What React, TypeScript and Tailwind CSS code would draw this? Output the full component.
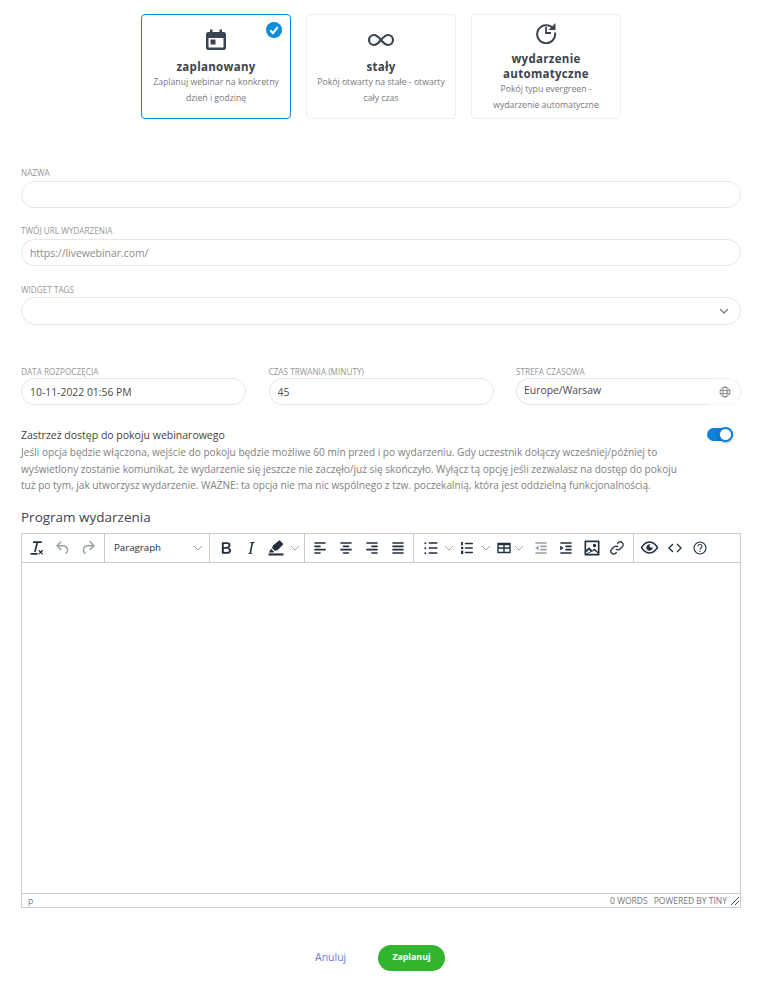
import React from "react";

const I = ({ children, s = 20, cls = "text-[#222f3e]" }: { children: React.ReactNode; s?: number; cls?: string }) => (
  <svg width={s} height={s} viewBox="0 0 24 24" fill="currentColor" className={cls}>{children}</svg>
);

const lines = (rows: [number, number][]) =>
  rows.map(([x, w], i) => <rect key={i} x={x} y={5 + i * 4} width={w} height={2} rx={1} />);

const Chev = ({ cls = "w-[10px]" }: { cls?: string }) => (
  <span className={`flex justify-center ${cls}`}>
    <svg className="shrink-0" width="10" height="10" viewBox="0 0 10 10" fill="none" stroke="#a0a6ae" strokeWidth="1"><path d="M1 3l4 4 4-4" /></svg>
  </span>
);

const B = ({ children, w = "w-[26px]" }: { children: React.ReactNode; w?: string }) => (
  <span className={`flex h-[28px] shrink-0 items-center justify-center ${w}`}>{children}</span>
);

const Group = ({ cls, children }: { cls: string; children: React.ReactNode }) => (
  <div className={`flex h-[28px] shrink-0 items-center border-r border-[#cccccc] ${cls}`}>{children}</div>
);

const Field = ({ label, children, mb = "mb-[2px]" }: { label: string; children: React.ReactNode; mb?: string }) => (
  <div className="min-w-0">
    <div className={`text-[8.2px] uppercase leading-[12px] text-[#969696] ${mb}`}>{label}</div>
    {children}
  </div>
);

const inputCls =
  "block h-[27px] w-full rounded-[14px] border border-[#e6e6e6] bg-white px-[8px] text-[10.4px] text-[#4a4a4a] outline-none placeholder:text-[#8a8a8a]";

const Card = ({ active, icon, title, desc }: { active?: boolean; icon: React.ReactNode; title: string; desc: string[] }) => (
  <div className={`relative flex h-[105px] w-[150px] flex-col items-center justify-center rounded-[4px] border bg-white px-[6px] text-center ${active ? "border-[#0d8ddb]" : "border-[#eeeeee]"}`}>
    {active && (
      <svg className="absolute right-[8px] top-[7px]" width="16" height="16" viewBox="0 0 16 16">
        <circle cx="8" cy="8" r="8" fill="#0d8ddb" />
        <path d="M4.3 8.3l2.6 2.8 4.8-6" fill="none" stroke="#fff" strokeWidth="2" />
      </svg>
    )}
    {icon}
    <div className="mt-[7px] text-[11.5px] font-bold leading-[15px] tracking-[0.3px] text-[#3c4350]">{title}</div>
    {desc.map((d) => (
      <div key={d} className="text-[8.7px] leading-[16px] text-[#77787d]">{d}</div>
    ))}
  </div>
);

export default function App() {
  return (
    <div className="min-h-[986px] w-[768px] bg-white pl-[21px] pr-[27px] pt-[14px] font-['Open_Sans',sans-serif]">
      <div className="flex justify-center gap-[15px]">
        <Card
          active
          title="zaplanowany"
          desc={["Zaplanuj webinar na konkretny", "dzień i godzinę"]}
          icon={
            <svg width="24" height="24" viewBox="0 0 24 24" className="text-[#3c4350]" fill="currentColor">
              <path fillRule="evenodd" d="M6 1.5h2.5V4h7V1.5H18V4h1.5A2.5 2.5 0 0 1 22 6.5v13a2.5 2.5 0 0 1-2.5 2.5h-15A2.5 2.5 0 0 1 2 19.5v-13A2.5 2.5 0 0 1 4.5 4H6V1.5zM4.5 10v9.500h15V10h-15zM6.5 11.500h5v5h-5v-5z" />
            </svg>
          }
        />
        <Card
          title="stały"
          desc={["Pokój otwarty na stałe - otwarty", "cały czas"]}
          icon={
            <svg width="28" height="24" viewBox="0 0 28 24" fill="none" stroke="#3c4350" strokeWidth="2.2">
              <path d="M14 12c-2.5-3-4.3-5-7-5a5 5 0 0 0 0 10c2.700 0 4.500-2 7-5zm0 0c2.500 3 4.300 5 7 5a5 5 0 0 0 0-10c-2.700 0-4.500 2-7 5z" />
            </svg>
          }
        />
        <Card
          title="wydarzenie automatyczne"
          desc={["Pokój typu evergreen -", "wydarzenie automatyczne"]}
          icon={
            <svg width="24" height="24" viewBox="0 0 24 24" fill="none" stroke="#3c4350" strokeWidth="2">
              <path d="M19.5 9A9 9 0 1 0 21 12.500" />
              <path d="M12 7v6h5" strokeWidth="1.8" />
              <path d="M21.5 3v7h-7z" fill="#3c4350" stroke="none" />
            </svg>
          }
        />
      </div>

      <div className="mt-[48px] flex flex-col gap-[17px]">
        <Field label="Nazwa"><input className={inputCls} /></Field>
        <Field label="Twój URL wydarzenia"><input className={inputCls} placeholder="https://livewebinar.com/" /></Field>
        <div className="mt-[1px]">
          <Field label="Widget tags" mb="mb-[1px]">
            <div className="flex h-[28px] items-center justify-end rounded-[14px] border border-[#e6e6e6] pr-[11px]">
              <svg width="10" height="10" viewBox="0 0 10 10" fill="none" stroke="#7f7f7f" strokeWidth="1.3"><path d="M1 3l4 4 4-4" /></svg>
            </div>
          </Field>
        </div>
      </div>

      <div className="mt-[41px] grid grid-cols-3 gap-[22.5px]">
        <Field label="Data rozpoczęcia" mb="mb-0"><input className={inputCls} defaultValue="10-11-2022 01:56 PM" /></Field>
        <Field label="Czas trwania (minuty)" mb="mb-0"><input className={inputCls} defaultValue="45" /></Field>
        <Field label="Strefa czasowa" mb="mb-0">
          <div className="flex h-[27px] text-[10.4px] text-[#4a4a4a]">
            <span className="flex flex-1 items-center rounded-l-[14px] border-y border-l border-[#e6e6e6] pb-[2px] pl-[7px]">Europe/Warsaw</span>
            <span className="flex w-[31px] items-center justify-center rounded-r-[14px] border-y border-r border-[#eeeeee] border-b-[#f7f7f7]">
              <svg width="12" height="12" viewBox="0 0 24 24" fill="none" stroke="#8c8c8c" strokeWidth="2">
                <circle cx="12" cy="12" r="10" /><ellipse cx="12" cy="12" rx="4.5" ry="10" /><path d="M2 9h20M2 15h20" />
              </svg>
            </span>
          </div>
        </Field>
      </div>

      <div className="mt-[21px] flex justify-between">
        <div className="w-[664px]">
          <div className="text-[10.5px] leading-[18px] text-[#3f3f3f]">Zastrzeż dostęp do pokoju webinarowego</div>
          <p className="text-[10.1px] leading-[16.5px] text-[#7f7f7f]">
            Jeśli opcja będzie włączona, wejście do pokoju będzie możliwe 60 min przed i po wydarzeniu. Gdy uczestnik dołączy wcześniej/później to wyświetlony zostanie komunikat, że wydarzenie się jeszcze nie zaczęło/już się skończyło. Wyłącz tą opcję jeśli zezwalasz na dostęp do pokoju tuż po tym, jak utworzysz wydarzenie. WAŻNE: ta opcja nie ma nic wspólnego z tzw. poczekalnią, która jest oddzielną funkcjonalnością.
          </p>
        </div>
        <div className="relative mr-[8px] mt-[2px] h-[13px] w-[26px] rounded-full bg-[#0d82d6]">
          <div className="absolute right-0 top-[-1px] h-[15px] w-[15px] rounded-full border-2 border-[#0d82d6] bg-white shadow-[0_1px_3px_rgba(0,0,0,0.3)]" />
        </div>
      </div>

      <div className="mt-[13px] text-[13.5px] leading-[20px] text-[#3f4450]">Program wydarzenia</div>

      <div className="mt-[6px] flex h-[375px] w-[720px] flex-col border border-[#cccccc] text-[#222f3e]">
        <div className="flex h-[29px] shrink-0 border-b border-[#cccccc]">
          <Group cls="w-[83px] pl-[2px]">
            <B><I s={20}><path d="M13.2 6a1 1 0 0 1 0 .2l-2.6 10a1 1 0 0 1-1 .8h-.2a.8.8 0 0 1-.8-1l2.6-10H8a1 1 0 1 1 0-2h9a1 1 0 0 1 0 2h-3.800zM5 18h7a1 1 0 0 1 0 2H5a1 1 0 0 1 0-2zm13 1.5L16.5 18 15 19.5a.7.7 0 0 1-1-1l1.5-1.5-1.5-1.5a.7.7 0 0 1 1-1l1.5 1.5 1.5-1.5a.7.7 0 0 1 1 1L17.5 17l1.5 1.5a.7.7 0 0 1-1 1z" /></I></B>
            <B w="w-[25px]"><I s={18} cls="text-[#9aa0a8]"><path d="M6.4 8H12c3.7 0 6.2 2 6.8 5.1.6 2.7-.4 5.6-2.3 6.8a1 1 0 0 1-1-1.8c1.1-.6 1.8-2.7 1.4-4.600-.5-2.100-2.100-3.500-4.900-3.500H6.400l3.300 3.300a1 1 0 1 1-1.400 1.400l-5-5a1 1 0 0 1 0-1.400l5-5a1 1 0 0 1 1.400 1.400L6.400 8z" /></I></B>
            <B><I s={18} cls="text-[#9aa0a8]"><path d="M17.6 10H12c-2.800 0-4.400 1.400-4.900 3.500-.4 2 .3 4 1.400 4.600a1 1 0 1 1-1 1.800c-2-1.200-2.900-4.100-2.300-6.800.6-3 3-5.100 6.800-5.100h5.600l-3.300-3.300a1 1 0 1 1 1.400-1.400l5 5a1 1 0 0 1 0 1.400l-5 5a1 1 0 0 1-1.400-1.400l3.300-3.300z" /></I></B>
          </Group>
          <Group cls="w-[105px] pl-[9px] pr-[6px]">
            <span className="flex-1 pt-[1px] text-[9.7px] text-[#222f3e]">Paragraph</span>
            <Chev />
          </Group>
          <Group cls="w-[95px] pl-[3px]">
            <B w="w-[25px]"><I s={20}><path d="M7.8 19c-.3 0-.5 0-.6-.2l-.2-.5V5.700c0-.2 0-.4.2-.5l.6-.2h5c1.500 0 2.700.3 3.500 1 .7.6 1.100 1.400 1.100 2.500a3 3 0 0 1-.6 1.900c-.4.6-1 1-1.600 1.200.4.1.9.3 1.300.6s.8.7 1 1.200c.4.4.5 1 .5 1.600 0 1.300-.4 2.300-1.300 3-.8.7-2.100 1-3.800 1H7.800zm5-8.300c.6 0 1.200-.1 1.600-.5.4-.3.6-.7.6-1.300 0-1.100-.8-1.700-2.300-1.700H9.300v3.500h3.400zm.5 6c.7 0 1.300-.1 1.700-.4.4-.4.6-.9.6-1.500s-.2-1-.7-1.400c-.4-.3-1-.4-2-.4H9.400v3.800h4z" /></I></B>
            <B w="w-[25px]"><I s={20}><path d="M16.7 4.700l-.1.9h-.3c-.6 0-1 0-1.400.3-.3.3-.4.6-.5 1.100l-2.100 9.800v.6c0 .5.400.8 1.400.8h.2l-.2.8H8l.2-.8h.2c1.100 0 1.800-.5 2-1.500l2-9.800.1-.5c0-.6-.4-.8-1.400-.8h-.3l.2-.9h5.800z" /></I></B>
            <B w="w-[25px]"><I s={20}><path d="M3 18.500h18V21H3z" /><path d="M15 3.500c.7-.6 1.600-.6 2.200 0l2.800 2.800c.6.6.6 1.500 0 2.200l-6.500 6.500-1.500-.2-1 1-4-4 1-1-.1-1.500z" /><path d="M6 12.800l3.700 3.700-1.200 1H3.500z" /></I></B>
            <Chev cls="w-[13px]" />
          </Group>
          <Group cls="w-[109px] pl-[2px]">
            <B><I>{lines([[5, 14], [5, 8], [5, 14], [5, 8]])}</I></B>
            <B><I>{lines([[5, 14], [8, 8], [5, 14], [8, 8]])}</I></B>
            <B><I>{lines([[5, 14], [11, 8], [5, 14], [11, 8]])}</I></B>
            <B><I>{lines([[5, 14], [5, 14], [5, 14], [5, 14]])}</I></B>
          </Group>
          <Group cls="w-[220px] pl-[4px]">
            <B w="w-[26px]"><I><rect x="4" y="5" width="2.4" height="2.4" rx="1" /><rect x="4" y="11" width="2.4" height="2.4" rx="1" /><rect x="4" y="17" width="2.4" height="2.4" rx="1" /><rect x="9" y="5" width="11" height="2" rx="1" /><rect x="9" y="11" width="11" height="2" rx="1" /><rect x="9" y="17" width="11" height="2" rx="1" /></I></B>
            <Chev />
            <span className="w-[4px] shrink-0" />
            <B w="w-[18px]"><I><rect x="4" y="4" width="2.5" height="4.5" /><rect x="4" y="10.500" width="3" height="3" /><rect x="4" y="15.500" width="3" height="4.500" /><rect x="9" y="5" width="11" height="2" rx="1" /><rect x="9" y="11" width="11" height="2" rx="1" /><rect x="9" y="17" width="11" height="2" rx="1" /></I></B>
            <span className="w-[5px] shrink-0" />
            <Chev />
            <span className="w-[1px] shrink-0" />
            <B w="w-[24px]"><I s={16}><path fillRule="evenodd" d="M3 4h18a1 1 0 0 1 1 1v14a1 1 0 0 1-1 1H3a1 1 0 0 1-1-1V5a1 1 0 0 1 1-1zm1 7h7V8H4v3zm9 0h7V8h-7v3zm-9 2v4.500h7V13H4zm9 0v4.500h7V13h-7z" /></I></B>
            <Chev cls="w-[6px]" />
            <span className="w-[6.5px] shrink-0" />
            <B w="w-[25px]"><I cls="text-[#9aa0a8]">{lines([[5, 14], [11, 8], [11, 8], [5, 14]])}<path d="M9 9v6l-4-3z" /></I></B>
            <B w="w-[25px]"><I>{lines([[5, 14], [11, 8], [11, 8], [5, 14]])}<path d="M5 9v6l4-3z" /></I></B>
            <B w="w-[26px]"><I s={20}><path fillRule="evenodd" d="M4 3h16a1 1 0 0 1 1 1v16a1 1 0 0 1-1 1H4a1 1 0 0 1-1-1V4a1 1 0 0 1 1-1zm1 2v9.500L8.500 11l4 4 2.500-2.500 4 4V5H5zm14 14v-.500l-4-3.500-8.500 4H19zM5 17.500L8.500 14l2 2L5 19zM15 7a2 2 0 1 1 0 4 2 2 0 0 1 0-4z" /></I></B>
            <B w="w-[24px]"><svg width="16" height="16" viewBox="0 0 24 24" fill="none" stroke="#222f3e" strokeWidth="2"><path d="M10.5 13.500a4 4 0 0 0 6 0l3.500-3.500a4 4 0 0 0-6-6l-1.500 1.500" /><path d="M13.5 10.500a4 4 0 0 0-6 0l-3.500 3.500a4 4 0 0 0 6 6l1.500-1.500" /></svg></B>
          </Group>
          <div className="flex h-[28px] items-center pl-[3px]">
            <B w="w-[25px]"><I s={19}><path d="M3.5 12.500c.5.8 1.100 1.600 1.800 2.300 2 2 4.200 3.200 6.700 3.200s4.700-1.200 6.700-3.200a16.200 16.200 0 0 0 2.100-2.800 15.700 15.700 0 0 0-2.100-2.800c-2-2-4.200-3.200-6.700-3.200a9.300 9.300 0 0 0-6.700 3.200A16.200 16.200 0 0 0 3.200 12c0 .2.200.3.300.5zm-2.400-1l.7-1.200L4 7.800C6.200 5.400 8.900 4 12 4c3 0 5.800 1.400 8.100 3.800a18.200 18.200 0 0 1 2.800 3.700v1l-.7 1.200-2.100 2.500c-2.300 2.400-5 3.800-8.100 3.800-3 0-5.800-1.400-8.100-3.800a18.200 18.200 0 0 1-2.800-3.700 1 1 0 0 1 0-1zm12-3.300a2 2 0 1 0 2.700 2.700 4 4 0 1 1-2.700-2.700z" /></I></B>
            <B w="w-[25px]"><svg width="16" height="16" viewBox="0 0 24 24" fill="none" stroke="#222f3e" strokeWidth="2"><path d="M9 6l-6 6 6 6M15 6l6 6-6 6" /></svg></B>
            <B w="w-[26px]"><svg width="16" height="16" viewBox="0 0 24 24" fill="none" stroke="#222f3e" strokeWidth="1.6"><circle cx="12" cy="12" r="9" /><path d="M9 9.500a3 3 0 1 1 4.500 2.600c-1 .6-1.500 1-1.500 2.400M12 16v2" /></svg></B>
          </div>
        </div>
        <div className="flex-1" />
        <div className="flex h-[14px] shrink-0 items-center justify-between border-t border-[#cccccc] pl-[6px] pr-[1px] pt-[2px] text-[8.5px] text-[#6f7782]">
          <span>p</span>
          <span className="flex items-center">
            <span className="mr-[6px] uppercase">0 words</span>
            <span className="uppercase">Powered by Tiny</span>
            <svg className="ml-[4px]" width="8" height="8" viewBox="0 0 8 8" stroke="#555" strokeWidth="1"><path d="M8 0L0 8M8 4L4 8" /></svg>
          </span>
        </div>
      </div>

      <div className="mt-[37px] flex items-center">
        <span className="ml-[294px] w-[63px] text-[10.5px] text-[#6b77d6]">Anuluj</span>
        <span className="flex h-[26px] w-[67px] items-center justify-center rounded-full bg-[#31b52e] text-[8.8px] font-bold text-white">Zaplanuj</span>
      </div>
    </div>
  );
}
